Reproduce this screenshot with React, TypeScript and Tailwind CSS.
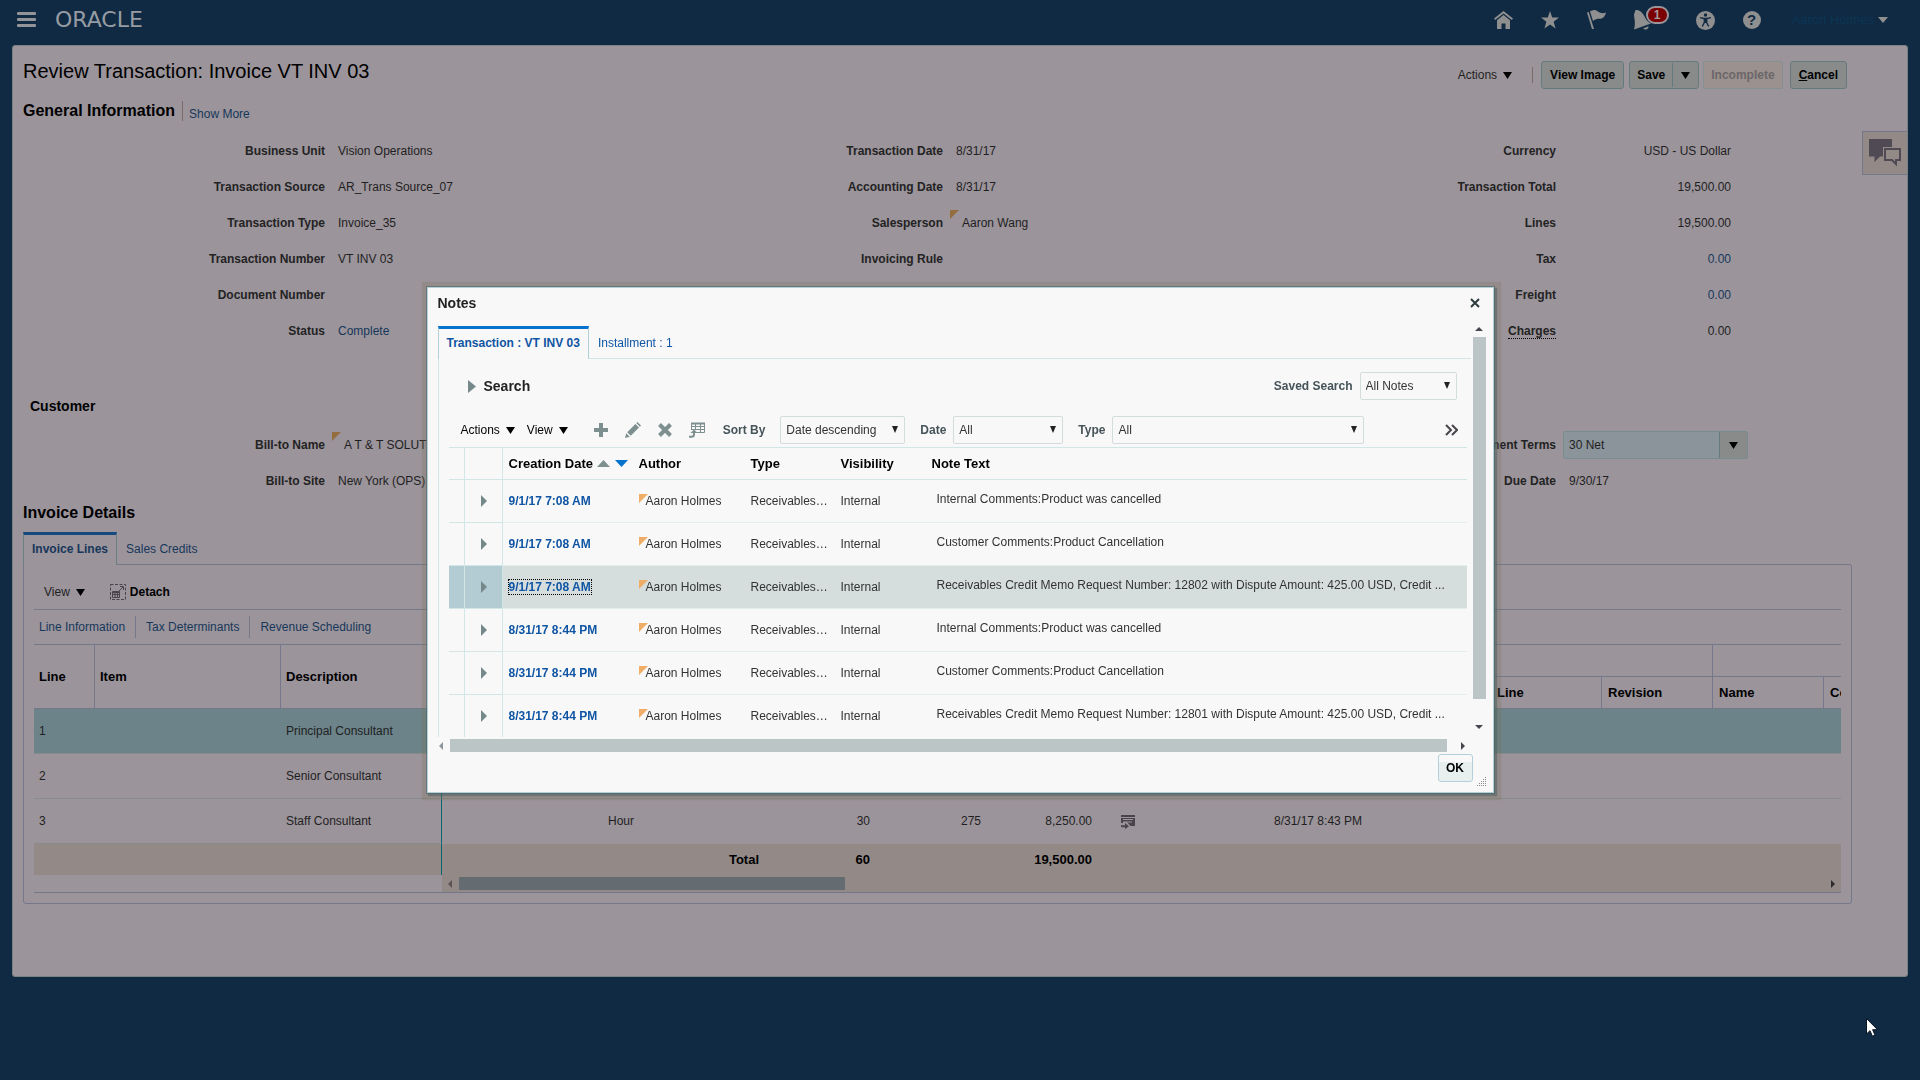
import type { ReactNode } from "react";

interface FieldProps {
    label: string;
    children?: ReactNode;
    dotted?: boolean;
}

interface Note {
    date: string;
    text: string;
    selected?: boolean;
}

const notes: Note[] = [
    { date: "9/1/17 7:08 AM", text: "Internal Comments:Product was cancelled" },
    { date: "9/1/17 7:08 AM", text: "Customer Comments:Product Cancellation" },
    { date: "9/1/17 7:08 AM", text: "Receivables Credit Memo Request Number: 12802 with Dispute Amount: 425.00 USD, Credit ...", selected: true },
    { date: "8/31/17 8:44 PM", text: "Internal Comments:Product was cancelled" },
    { date: "8/31/17 8:44 PM", text: "Customer Comments:Product Cancellation" },
    { date: "8/31/17 8:44 PM", text: "Receivables Credit Memo Request Number: 12801 with Dispute Amount: 425.00 USD, Credit ..." },
];

const lines = [
    { line: 1, description: "Principal Consultant", selected: true },
    { line: 2, description: "Senior Consultant" },
    { line: 3, description: "Staff Consultant" },
];

function Caret({ className = "text-black" }: { className?: string }) {
    return (
        <svg width="9" height="7" viewBox="0 0 9 7" fill="currentColor" className={className} aria-hidden="true">
            <path d="M0 0h9L4.5 7z" />
        </svg>
    );
}

function RightArrow({ className = "" }: { className?: string }) {
    return (
        <svg width="6" height="12" viewBox="0 0 6 12" fill="currentColor" className={className} aria-hidden="true">
            <path d="M0 0l6 6-6 6z" />
        </svg>
    );
}

function Corner({ className = "" }: { className?: string }) {
    return (
        <svg width="9" height="9" viewBox="0 0 9 9" fill="currentColor" className={className} aria-hidden="true">
            <path d="M0 0h9L0 9z" />
        </svg>
    );
}

function Field({ label, children, dotted }: FieldProps) {
    return (
        <div className="flex h-9 items-center gap-[13px]">
            <span className="flex w-[302px] shrink-0 justify-end font-bold text-[#232323]">
                <span className={dotted ? "border-b border-dotted border-black" : ""}>{label}</span>
            </span>
            {children}
        </div>
    );
}

function Amount({ children, link }: { children: ReactNode; link?: boolean }) {
    return link ? (
        <a href="#" className="w-[162px] text-right text-[#17375a]">{children}</a>
    ) : (
        <span className="w-[162px] text-right">{children}</span>
    );
}

function NoteSelect({ id, label, value, width, gap }: { id: string; label: string; value: string; width: string; gap: string }) {
    return (
        <div className={`flex items-center ${gap}`}>
            <label htmlFor={id} className="font-bold text-[#46545a]">{label}</label>
            <div className={`relative ${width}`}>
                <select
                    id={id}
                    defaultValue={value}
                    className="block h-7 w-full appearance-none rounded-[2px] border border-[#d3dddc] bg-[#f8f8f8] px-[5px] text-[#333]"
                >
                    <option>{value}</option>
                </select>
                <svg width="6" height="7" viewBox="0 0 6 7" className="pointer-events-none absolute top-[10px] right-[7px]" aria-hidden="true">
                    <path d="M0 0h6L3 7z" fill="#222" />
                </svg>
            </div>
        </div>
    );
}

function TopBar() {
    return (
        <header className="flex h-[45px] items-start justify-between pr-8 pl-[17px]">
            <div className="flex h-10 items-center gap-[18px]">
                <button aria-label="Navigator">
                    <svg width="20" height="16" viewBox="0 0 20 16" fill="#92949a">
                        <rect y="0" width="19" height="3" rx="1" />
                        <rect y="6" width="19" height="3" rx="1" />
                        <rect y="12" width="19" height="3" rx="1" />
                    </svg>
                </button>
                <span className="font-['DejaVu_Sans',sans-serif] text-[22px] leading-6 text-[#979ca3]">ORACLE</span>
            </div>
            <nav className="flex h-10 items-center text-[#908f90]">
                <a href="#" aria-label="Home" className="mr-7">
                    <svg width="19" height="18" viewBox="0 0 19 18" fill="currentColor">
                        <path d="M9.500 0L19 7.600 17.800 9 9.500 2.500 1.200 9 0 7.600z" />
                        <path d="M9.500 4L16 9.300V18H11.500V12.500H7.500V18H3V9.300z" />
                    </svg>
                </a>
                <a href="#" aria-label="Favorites" className="mr-7">
                    <svg width="18" height="18" viewBox="0 0 18 18" fill="currentColor">
                        <path d="M9 0l2.200 6.600H18l-5.400 4.200 2 6.800L9 13.400l-5.600 4.200 2-6.800L0 6.600h6.800z" />
                    </svg>
                </a>
                <a href="#" aria-label="Watchlist" className="mr-7">
                    <svg width="19" height="20" viewBox="0 0 19 20" fill="currentColor">
                        <path d="M0 2.600L1.700 2 7 19H5z" />
                        <path d="M3 1.500C7-1 9 0 11 1.600S16 4 19 2.600C18 6 17 8 14.500 8.500S10 8 6 11z" />
                    </svg>
                </a>
                <a href="#" aria-label="Notifications" className="relative mr-7">
                    <svg width="34" height="20" viewBox="0 0 34 20" fill="currentColor">
                        <path d="M1.500 0C4-.4 7 1 9 4c2.500 3.500 3 7 8 9.500L0 19.500C2 13 0 8 0 4.500z" />
                        <path d="M9 18.500l5.500-2.300c.5 2.800-3.500 4.600-5.500 2.300z" />
                    </svg>
                    <span className="absolute -top-1 left-3 flex h-[18px] w-[23px] items-center justify-center rounded-full border-2 border-[#9b949b] bg-[#7b0003] text-[12px] font-bold text-[#a49da0]">1</span>
                </a>
                <a href="#" aria-label="Accessibility" className="mr-7">
                    <svg width="19" height="19" viewBox="0 0 19 19">
                        <circle cx="9.500" cy="9.500" r="9.500" fill="currentColor" />
                        <circle cx="9.500" cy="4" r="1.700" fill="#112b43" />
                        <path d="M4 6.600l4 .9h3l4-.9M8.300 8v3.500L6.300 15.500M10.700 8v3.500l2 4" fill="none" stroke="#112b43" strokeWidth="1.400" />
                        <path d="M8 7h3v5H8z" fill="#112b43" />
                    </svg>
                </a>
                <a href="#" aria-label="Help" className="mr-[31px]">
                    <span className="flex size-[18px] items-center justify-center rounded-full bg-[#908f90] text-[15px] font-bold text-[#112b43]">?</span>
                </a>
                <button className="flex items-center gap-1 text-[13px] text-[#0b3555]">
                    Aaron Holmes
                    <svg width="10" height="6" viewBox="0 0 10 6" aria-hidden="true">
                        <path d="M0 0h10L5 6z" fill="#908f90" />
                    </svg>
                </button>
            </nav>
        </header>
    );
}

function PageActions() {
    const button = "h-7 rounded-[3px] border border-[#647b7d] bg-[#888b89] px-2 font-bold text-black";
    return (
        <div className="flex items-center">
            <button className="flex items-center gap-1.5">
                Actions <Caret />
            </button>
            <span className="mr-2 ml-5 h-4 w-px bg-[#7b6a66]" />
            <button className={button}>View Image</button>
            <div className="ml-[5px] flex h-7 items-center rounded-[3px] border border-[#647b7d] bg-[#888b89]">
                <button className="h-full px-[7px] font-bold text-black">Save</button>
                <button aria-label="More save options" className="flex h-6 items-center border-l border-[#647b7d] px-2">
                    <Caret />
                </button>
            </div>
            <button disabled className="ml-1 h-7 rounded-[2px] border border-[#849092] bg-[#9b918f] px-[7px] font-bold text-[#6b6768]">Incomplete</button>
            <button className={`ml-[7px] ${button}`}><u>C</u>ancel</button>
        </div>
    );
}

function InvoiceLines() {
    const th = "border-[#75778b] px-1.5 text-left text-[13px] font-bold text-black";
    const frozenTh = "border-[#75778b] px-[5px] text-left text-[13px] font-bold text-black";
    return (
        <div className="flex border-b border-[#75778b]">
            <div className="w-[408px] shrink-0">
                <table className="w-full table-fixed border-separate border-spacing-0">
                    <colgroup>
                        <col className="w-[61px]" />
                        <col className="w-[186px]" />
                        <col />
                    </colgroup>
                    <thead>
                        <tr className="h-16">
                            <th className={`${frozenTh} border-r border-b`}>Line</th>
                            <th className={`${frozenTh} border-r border-b`}>Item</th>
                            <th className={`${frozenTh} border-b`}>Description</th>
                        </tr>
                    </thead>
                    <tbody>
                        {lines.map((row) => (
                            <tr key={row.line} className={row.selected ? "h-[45px] bg-[#6b8389]" : "h-[45px]"}>
                                <td className="border-b border-[#888b89] px-[5px]">{row.line}</td>
                                <td className="border-b border-[#888b89] px-[5px]"></td>
                                <td className="border-r border-b border-r-[#0a6573] border-b-[#888b89] px-[5px]">{row.description}</td>
                            </tr>
                        ))}
                        <tr className="h-[31px] bg-[#938a88]">
                            <td colSpan={3} className="border-r border-[#0a6573]"></td>
                        </tr>
                    </tbody>
                </table>
            </div>
            <div className="min-w-0 flex-1 overflow-hidden">
                <table className="w-[1493px] table-fixed border-separate border-spacing-0">
                    <colgroup>
                        <col className="w-[161px]" />
                        <col className="w-[162px]" />
                        <col className="w-[111px]" />
                        <col className="w-[111px]" />
                        <col className="w-[111px]" />
                        <col className="w-[60px]" />
                        <col className="w-[111px]" />
                        <col className="w-[111px]" />
                        <col className="w-[111px]" />
                        <col className="w-[111px]" />
                        <col className="w-[111px]" />
                        <col className="w-[111px]" />
                        <col className="w-[111px]" />
                    </colgroup>
                    <thead>
                        <tr className="h-8">
                            <th colSpan={8} className={`${th} border-b`}></th>
                            <th colSpan={3} className={`${th} border-r border-b`}></th>
                            <th colSpan={2} className={`${th} border-b`}></th>
                        </tr>
                        <tr className="h-8">
                            <th colSpan={8} className={`${th} border-b`}></th>
                            <th className={`${th} border-r border-b`}></th>
                            <th className={`${th} border-r border-b`}>Line</th>
                            <th className={`${th} border-r border-b`}>Revision</th>
                            <th className={`${th} border-r border-b`}>Name</th>
                            <th className={`${th} border-b`}>Code</th>
                        </tr>
                    </thead>
                    <tbody>
                        <tr className="h-[45px] bg-[#6b8389]">
                            <td colSpan={13} className="border-b border-[#888b89]"></td>
                        </tr>
                        <tr className="h-[45px]">
                            <td colSpan={13} className="border-b border-[#888b89]"></td>
                        </tr>
                        <tr className="h-[45px]">
                            <td></td>
                            <td className="px-[5px] pb-px">Hour</td>
                            <td className="px-1.5 pb-px text-right">30</td>
                            <td className="px-1.5 pb-px text-right">275</td>
                            <td className="px-1.5 pb-px text-right">8,250.00</td>
                            <td>
                                <button aria-label="Details" className="mx-auto block text-[#4a444c]">
                                    <svg width="14" height="14" viewBox="0 0 14 14" fill="currentColor">
                                        <path d="M0 0h14v2H0zM0 3h14v8H9.500L5.500 6.500H2V8H0z" />
                                        <path d="M2 4.500h10M5 7l6 0" stroke="#9b949b" strokeWidth="1" />
                                        <path d="M0 10.200h4V8l4 3.200-4 3v-2H0z" />
                                    </svg>
                                </button>
                            </td>
                            <td></td>
                            <td className="px-[5px] pb-px whitespace-nowrap">8/31/17 8:43 PM</td>
                            <td colSpan={5}></td>
                        </tr>
                        <tr className="h-[31px] bg-[#938a88] text-[13px] font-bold text-black">
                            <td></td>
                            <td className="px-1.5 text-right">Total</td>
                            <td className="px-1.5 text-right">60</td>
                            <td></td>
                            <td className="px-1.5 text-right">19,500.00</td>
                            <td colSpan={8}></td>
                        </tr>
                    </tbody>
                </table>
                <div className="flex h-[17px] items-center bg-[#938a88] px-1.5">
                    <RightArrow className="h-2 w-1 rotate-180 text-[#5f5155]" />
                    <div className="ml-[7px] h-[13px] w-[386px] bg-[#646c72]" />
                    <RightArrow className="ml-auto h-2 w-1 text-[#2d2a2d]" />
                </div>
            </div>
        </div>
    );
}

function NotesTable() {
    const th = "border-b border-[#d3e6e6] px-1.5 text-left text-[13px] font-bold text-black";
    return (
        <table className="w-full table-fixed border-separate border-spacing-0 border-t border-[#d3e6e6]">
            <colgroup>
                <col className="w-4" />
                <col className="w-[38px]" />
                <col className="w-[130px]" />
                <col className="w-[112px]" />
                <col className="w-[90px]" />
                <col className="w-[91px]" />
                <col />
            </colgroup>
            <thead>
                <tr className="h-8">
                    <th className="border-r border-b border-[#d3e6e6]"></th>
                    <th className="border-r border-b border-[#d3e6e6]"></th>
                    <th className={th}>
                        <span className="flex items-center gap-1 whitespace-nowrap">
                            Creation Date
                            <svg width="31" height="7" viewBox="0 0 31 7" className="shrink-0" aria-hidden="true">
                                <path d="M0 7L6.500 0 13 7z" fill="#7d8f8e" />
                                <path d="M18 0h13l-6.500 7z" fill="#0572ce" />
                            </svg>
                        </span>
                    </th>
                    <th className={th}>Author</th>
                    <th className={th}>Type</th>
                    <th className={th}>Visibility</th>
                    <th className={th}>Note Text</th>
                </tr>
            </thead>
            <tbody>
                {notes.map((note, i) => {
                    const side = note.selected ? "border-r border-b border-[#d3e6e6] bg-[#b3cbd3]" : "border-r border-b border-[#d3e6e6]";
                    const td = "border-b border-[#e4eeed] px-1.5 whitespace-nowrap";
                    return (
                        <tr key={i} className={note.selected ? "h-[43px] bg-[#d6dedd]" : "h-[43px]"}>
                            <td className={side}></td>
                            <td className={side}>
                                <button aria-label="Expand note" className="ml-4 block text-[#75888a]">
                                    <RightArrow />
                                </button>
                            </td>
                            <td className={td}>
                                <a href="#" className={note.selected ? "font-bold text-[#0f55a4] outline outline-dotted outline-black" : "font-bold text-[#0f55a4]"}>
                                    {note.date}
                                </a>
                            </td>
                            <td className={td}>
                                <span className="relative pl-[7px]">
                                    <Corner className="absolute top-0 left-0 text-[#f0ad67]" />
                                    <span className="relative">Aaron Holmes</span>
                                </span>
                            </td>
                            <td className={td}>Receivables…</td>
                            <td className={td}>Internal</td>
                            <td className={`${td} pb-1 pl-[11px]`}>{note.text}</td>
                        </tr>
                    );
                })}
            </tbody>
        </table>
    );
}

function NotesDialog() {
    return (
        <div className="fixed inset-0 flex items-center justify-center">
            <div
                role="dialog"
                aria-label="Notes"
                className="w-[1067px] border border-[#b2d0d9] bg-[#f8f8f8] text-[#333] shadow-[0_0_0_1px_rgba(70,95,95,0.5),2px_2px_1px_1px_rgba(70,95,95,0.5),1px_1px_1px_6px_rgba(120,110,85,0.25)]"
            >
                <div className="flex h-[30px] items-center justify-between pr-[13px] pl-2.5">
                    <h2 className="text-[14px] font-bold text-[#222]">Notes</h2>
                    <button aria-label="Close">
                        <svg width="10" height="10" viewBox="0 0 10 10" stroke="#2c3b3e" strokeWidth="2">
                            <path d="M1 1l8 8M9 1l-8 8" />
                        </svg>
                    </button>
                </div>
                <div className="flex h-[419px] overflow-hidden pr-[7px] pl-2.5">
                    <div className="min-w-0 flex-1 pt-2">
                        <div role="tablist" className="flex h-8">
                            <button role="tab" aria-selected="true" className="relative -mb-px border-x border-t-3 border-x-[#b2d0d9] border-t-[#0572ce] bg-[#f8f8f8] px-2 pb-0.5 font-bold text-[#0f55a4]">
                                Transaction : VT INV 03
                            </button>
                            <button role="tab" className="px-[9px] pt-0.5 text-[#0f55a4]">Installment : 1</button>
                        </div>
                        <div className="border-t border-l border-[#d3e6e6] pr-1 pl-2.5">
                            <div className="flex h-[54px] items-center justify-between pr-2.5 pl-[19px]">
                                <button className="flex items-center gap-2 text-[14px] font-bold text-[#222]">
                                    <svg width="8" height="13" viewBox="0 0 8 13" aria-hidden="true">
                                        <path d="M0 0l8 6.500L0 13z" fill="#75888a" />
                                    </svg>
                                    Search
                                </button>
                                <NoteSelect id="saved" label="Saved Search" value="All Notes" width="w-[97px]" gap="gap-[7px]" />
                            </div>
                            <div className="flex h-[34px] items-center pr-[9px] pl-3">
                                <button className="flex items-center gap-1.5 text-black">Actions <Caret /></button>
                                <button className="ml-3 flex items-center gap-1.5 text-black">View <Caret /></button>
                                <div className="ml-[26px] flex items-center gap-[17px] text-[#7d8f8e]">
                                    <button aria-label="Create">
                                        <svg width="14" height="14" viewBox="0 0 14 14" fill="currentColor">
                                            <path d="M5 0h4v5h5v4H9v5H5V9H0V5h5z" />
                                        </svg>
                                    </button>
                                    <button aria-label="Edit">
                                        <svg width="16" height="16" viewBox="0 0 16 16" fill="currentColor">
                                            <path d="M0 16l1.200-4.800 3.600 3.600zM2.200 10.200L10.400 2l3.600 3.600-8.200 8.200zM11.300 1.100L12.400 0 16 3.600l-1.100 1.100z" />
                                        </svg>
                                    </button>
                                    <button aria-label="Delete">
                                        <svg width="14" height="14" viewBox="0 0 14 14" stroke="currentColor" strokeWidth="4">
                                            <path d="M1.500 1.500l11 11M12.500 1.500l-11 11" />
                                        </svg>
                                    </button>
                                    <button aria-label="Export to Excel">
                                        <svg width="16" height="16" viewBox="0 0 16 16" fill="none" stroke="currentColor">
                                            <path d="M2.500 8V1.500h13v9H8M2.500 4.500h13M2.500 7.500h13M6.500 1v7M11.500 1v10" />
                                            <path d="M2 1.500h14" strokeWidth="2" />
                                            <path d="M0 14.800h2.500q2.500 0 2.500-2.500V10" strokeWidth="2" />
                                            <path d="M1.500 11L5 7.500 8.500 11z" fill="currentColor" stroke="none" />
                                        </svg>
                                    </button>
                                </div>
                                <div className="ml-[18px] flex items-center gap-[15px]">
                                    <NoteSelect id="sort" label="Sort By" value="Date descending" width="w-[125px]" gap="gap-[15px]" />
                                    <NoteSelect id="date" label="Date" value="All" width="w-[110px]" gap="gap-[7px]" />
                                    <NoteSelect id="type" label="Type" value="All" width="w-[252px]" gap="gap-[7px]" />
                                </div>
                                <button aria-label="More tools" className="ml-auto">
                                    <svg width="13" height="12" viewBox="0 0 13 12" fill="none" stroke="#4a444c" strokeWidth="2">
                                        <path d="M1 1l5 5-5 5M7 1l5 5-5 5" />
                                    </svg>
                                </button>
                            </div>
                            <NotesTable />
                        </div>
                    </div>
                    <div className="ml-0.5 flex w-[13px] flex-col items-center pt-[7px] pb-[6px]">
                        <RightArrow className="h-2 w-1 -rotate-90 text-[#4a444c]" />
                        <div className="mt-1 h-[362px] w-full bg-[#bcc5c6]" />
                        <RightArrow className="mt-auto h-2 w-1 rotate-90 text-[#4a444c]" />
                    </div>
                </div>
                <div className="flex h-[17px] items-center pr-7 pl-[11px]">
                    <RightArrow className="h-2 w-1 shrink-0 rotate-180 text-[#8e979b]" />
                    <div className="mr-[14px] ml-[7px] h-[13px] flex-1 bg-[#bcc5c6]" />
                    <RightArrow className="h-2 w-1 shrink-0 text-[#4a444c]" />
                </div>
                <div className="flex h-[38px] items-start justify-end pr-1.5">
                    <button className="h-7 w-[35px] rounded-[3px] border border-[#b2d0d9] bg-linear-to-b from-[#f8f8f8] from-25% to-[#e7efef] to-25% font-bold text-black">OK</button>
                    <svg width="10" height="10" viewBox="0 0 10 10" className="mb-1.5 ml-1 self-end" fill="none" stroke="#8c8c8c" strokeDasharray="1 1" aria-hidden="true">
                        <path d="M0 9.500h10M2 7.500h8M4 5.500h6M6 3.500h4M8 1.500h2" />
                    </svg>
                </div>
            </div>
        </div>
    );
}

export default function App() {
    return (
        <div className="min-h-screen bg-[#102a43] font-['Liberation_Sans',Arial,sans-serif] text-[12px] leading-[14px] text-[#1f1f22]">
            <TopBar />
            <main className="relative mx-3 rounded-[3px] border border-[#7a8285] bg-[#9b949b] pr-[55px] pb-[72px] pl-2.5">
                <div className="flex items-start justify-between pt-[15px] pr-[5px]">
                    <h1 className="text-[20px] leading-5 text-black">Review Transaction: Invoice VT INV 03</h1>
                    <PageActions />
                </div>

                <div className="mt-2 flex h-7 items-center">
                    <h2 className="text-[16px] font-bold text-black">General Information</h2>
                    <a href="#" className="ml-[7px] border-l border-[#7b6a66] pt-1.5 pl-1.5 text-[#17375a]">Show More</a>
                </div>

                <div className="mt-2 grid grid-cols-[618fr_613fr_598fr]">
                    <div>
                        <Field label="Business Unit">Vision Operations</Field>
                        <Field label="Transaction Source">AR_Trans Source_07</Field>
                        <Field label="Transaction Type">Invoice_35</Field>
                        <Field label="Transaction Number">VT INV 03</Field>
                        <Field label="Document Number" />
                        <Field label="Status"><a href="#" className="text-[#17375a]">Complete</a></Field>
                    </div>
                    <div>
                        <Field label="Transaction Date">8/31/17</Field>
                        <Field label="Accounting Date">8/31/17</Field>
                        <Field label="Salesperson">
                            <span className="relative pl-1.5">
                                <Corner className="absolute -top-1.5 -left-1.5 text-[#936d3d]" />
                                Aaron Wang
                            </span>
                        </Field>
                        <Field label="Invoicing Rule" />
                    </div>
                    <div>
                        <Field label="Currency"><Amount>USD - US Dollar</Amount></Field>
                        <Field label="Transaction Total"><Amount>19,500.00</Amount></Field>
                        <Field label="Lines"><Amount>19,500.00</Amount></Field>
                        <Field label="Tax"><Amount link>0.00</Amount></Field>
                        <Field label="Freight"><Amount link>0.00</Amount></Field>
                        <Field label="Charges" dotted><Amount>0.00</Amount></Field>
                    </div>
                </div>

                <h3 className="mt-9 flex h-[42px] items-center pl-[7px] text-[14px] font-bold text-black">Customer</h3>
                <div className="grid grid-cols-[618fr_613fr_598fr]">
                    <div>
                        <Field label="Bill-to Name">
                            <span className="relative pl-1.5 whitespace-nowrap">
                                <Corner className="absolute -top-1.5 -left-1.5 text-[#936d3d]" />
                                A T &amp; T SOLUTIONS
                            </span>
                        </Field>
                        <Field label="Bill-to Site">New York (OPS)</Field>
                    </div>
                    <div />
                    <div>
                        <div className="flex h-9 items-center gap-[7px]">
                            <label htmlFor="terms" className="w-[302px] shrink-0 text-right font-bold text-[#232323]">Payment Terms</label>
                            <div className="flex h-7 w-[185px] overflow-hidden rounded-[2px] border border-[#788c8f]">
                                <input id="terms" defaultValue="30 Net" className="min-w-0 flex-1 bg-[#8b949b] px-[5px]" />
                                <button aria-label="Open payment terms" className="flex w-7 items-center justify-center border-l border-[#647b7d] bg-[#888b89]">
                                    <Caret />
                                </button>
                            </div>
                        </div>
                        <Field label="Due Date">9/30/17</Field>
                    </div>
                </div>

                <h2 className="flex h-7 items-center text-[16px] font-bold text-black">Invoice Details</h2>
                <div role="tablist" className="mt-[5px] flex h-8">
                    <button role="tab" aria-selected="true" className="relative -mb-px border-x border-t-3 border-x-[#6b7e80] border-t-[#144a80] bg-[#9b949b] px-2 pb-0.5 font-bold text-[#17375a]">
                        Invoice Lines
                    </button>
                    <button role="tab" className="px-[9px] pt-0.5 text-[#17375a]">Sales Credits</button>
                </div>
                <div className="rounded-[3px] rounded-tl-none border border-[#75778b] px-2.5 pb-2.5">
                    <div className="flex h-[45px] items-center border-b border-[#75778b] pt-2.5 pl-2.5">
                        <button className="flex items-center gap-1.5">View <Caret /></button>
                        <button className="ml-[25px] flex items-center gap-1 font-bold text-black">
                            <svg width="16" height="16" viewBox="0 0 16 16" fill="none" stroke="#4a444c" aria-hidden="true">
                                <path d="M.5.5h15v15H.5z" strokeDasharray="3 1.500" />
                                <path d="M2.500 7.500h7v6h-7zM2.500 10.500h7M5 8v6M7.500 8v6M2 8.500h7" />
                                <path d="M9 7l4-4M10 2.500h3.500V6" />
                            </svg>
                            Detach
                        </button>
                    </div>
                    <div className="flex h-[35px] items-center border-b border-[#75778b] pl-[5px] text-[#17375a]">
                        <a href="#" className="pr-2.5">Line Information</a>
                        <a href="#" className="flex h-[22px] items-center border-x border-[#75778b] px-2.5">Tax Determinants</a>
                        <a href="#" className="pl-2.5">Revenue Scheduling</a>
                    </div>
                    <InvoiceLines />
                </div>

                <button aria-label="Conversations" className="absolute top-[85px] right-0 flex h-11 w-[45px] items-center justify-center border border-r-0 border-[#75778b] bg-[#938a88]">
                    <svg width="33" height="28" viewBox="0 0 33 28" fill="#4f4a53">
                        <path d="M0 0h23v8h-9v9.500h-3L5.500 23v-5.500H0z" />
                        <path d="M16 10h15v11h-4v4l-4-4h-7z" fill="none" stroke="#4f4a53" strokeWidth="2" />
                    </svg>
                </button>
            </main>

            <NotesDialog />

            <svg width="12" height="19" viewBox="0 0 12 19" className="fixed right-[42px] bottom-[43px]" aria-hidden="true">
                <path d="M.5.5v15.500l3.500-3.300 2.400 5.500 2.600-1.100-2.400-5.400h4.900z" fill="#fff" stroke="#0a1520" />
            </svg>
        </div>
    );
}
